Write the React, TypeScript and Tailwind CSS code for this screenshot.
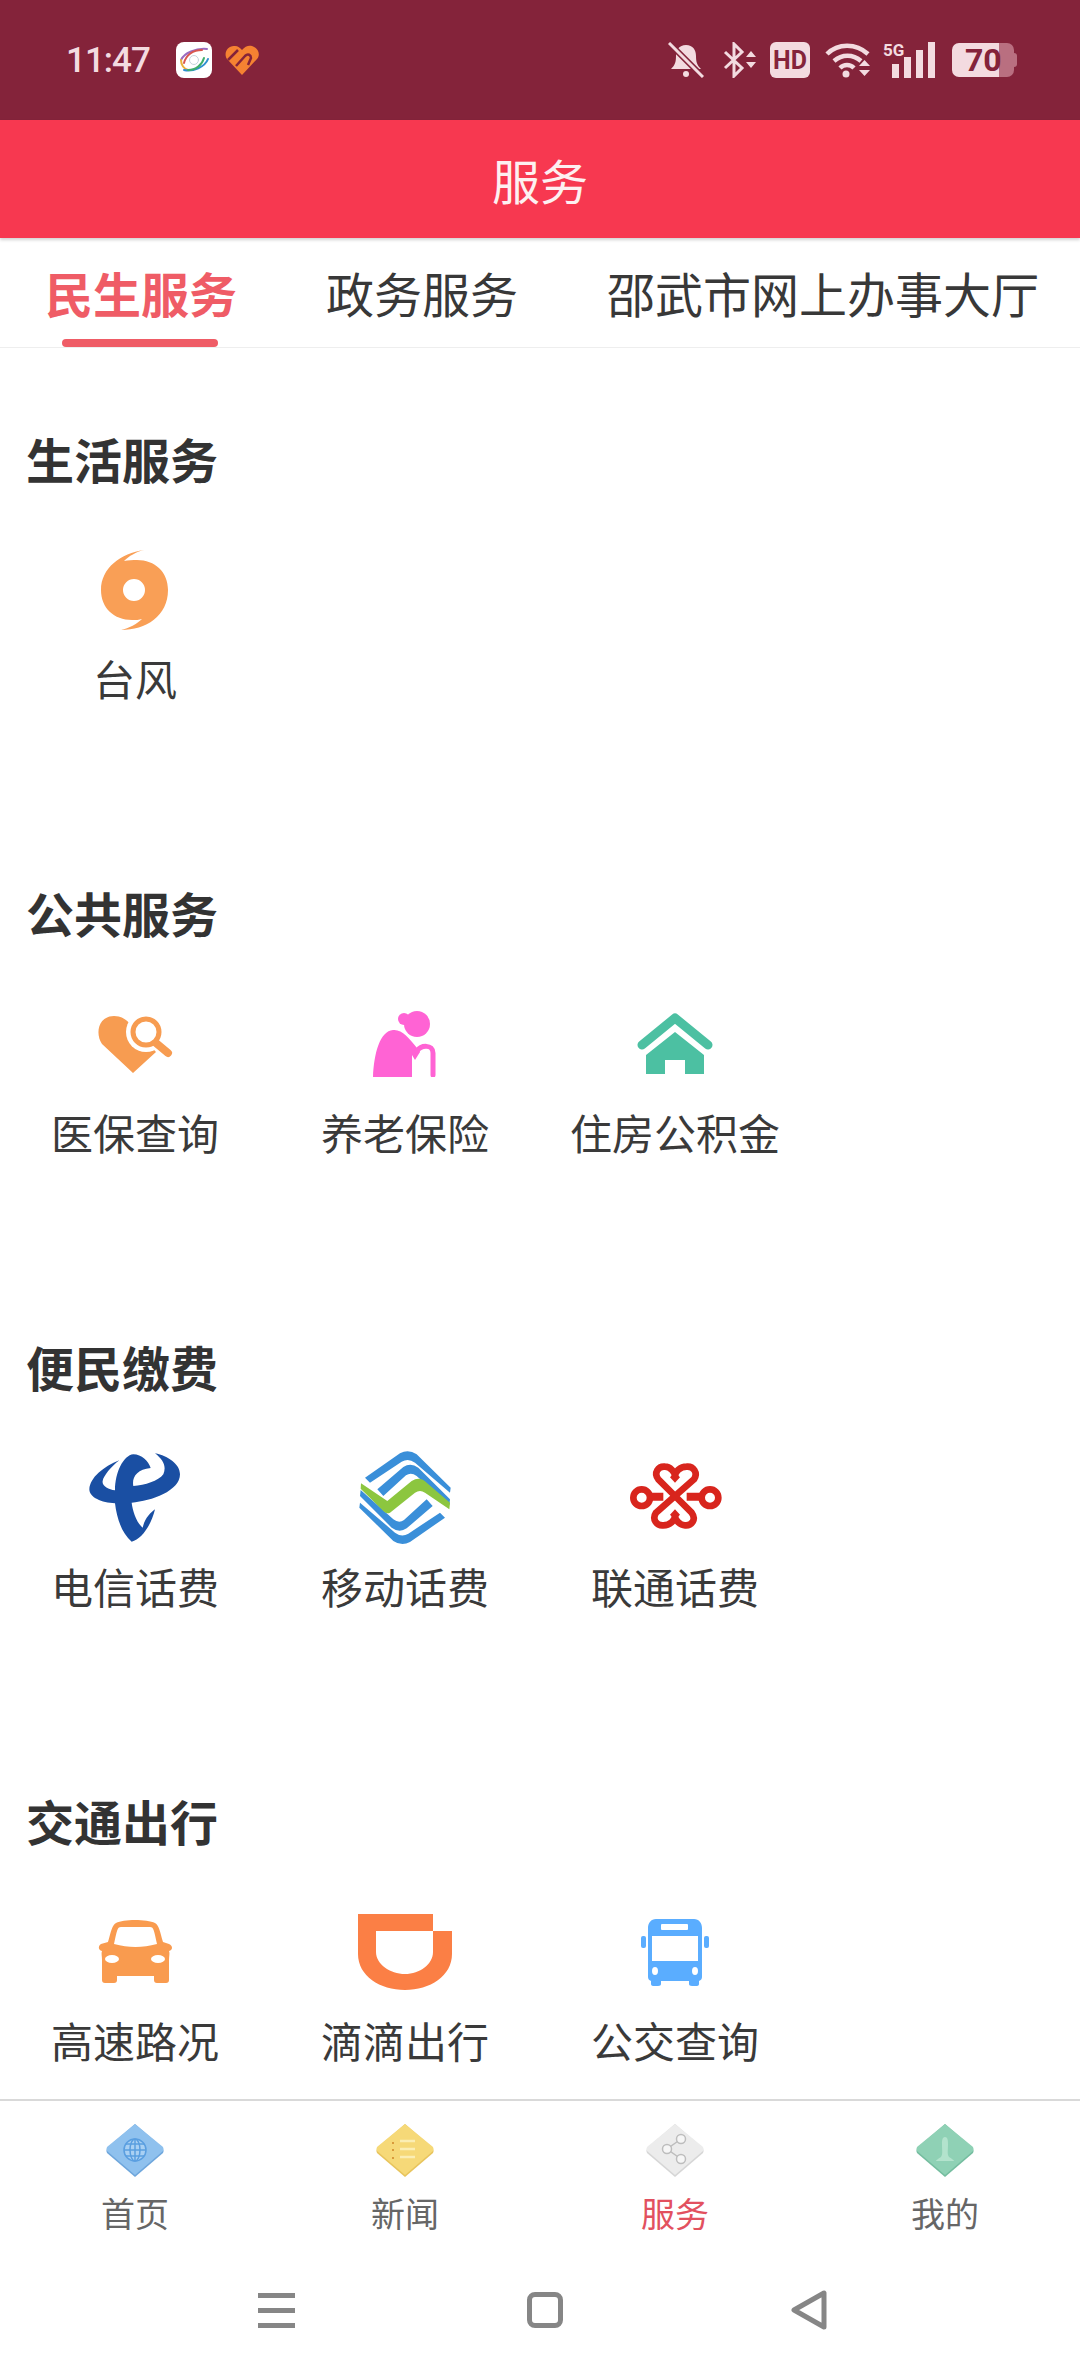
import type { ReactNode } from "react"

const CJK = "font-['Noto_Sans_CJK_SC','Roboto',sans-serif]"

/* status bar */
function AppBadge() {
  return (
    <div className="flex h-9 w-9 items-center justify-center rounded-lg bg-white">
      <svg width="32" height="26" viewBox="0 0 32 26" fill="none" strokeLinecap="round">
        <path d="M29 2C18 1 6 6 3 13" stroke="#9b6bc0" strokeWidth="2" />
        <path d="M24 3C15 3 8 8 6 16" stroke="#d9574f" strokeWidth="2" />
        <path d="M3 13C3 18 6 22 10 23" stroke="#e9b23c" strokeWidth="2" />
        <path d="M6 23C15 25 27 20 30 12" stroke="#2f8fd0" strokeWidth="2" />
        <path d="M10 23C18 23 24 18 26 11" stroke="#3fae6b" strokeWidth="2" />
        <circle cx="16" cy="13" r="4.5" stroke="#c8d3dc" strokeWidth="1" />
      </svg>
    </div>
  )
}

function OrangeHeart() {
  return (
    <svg width="34" height="30" viewBox="0 0 34 30">
      <path d="M17 30L2 14C-2 8 3 0 10 1C13 1 15 3 17 5C20 1 24 0 27 1C33 3 36 9 32 14Z" fill="#f58232" />
      <path d="M3 15L13 5M11 21L20 11C23 8 26 10 26 13L23 20" stroke="#84233a" strokeWidth="2.5" fill="none" />
    </svg>
  )
}

function StatusIcons() {
  const c = "#f3dbe0"
  return (
    <div className="flex items-center">
      <svg width="36" height="36" viewBox="0 0 36 36" className="mr-[18px]">
        <path d="M18 3C11 3 8 8 8 14C8 20 7 23 3 27H33C29 23 28 20 28 14C28 8 25 3 18 3Z" fill={c} />
        <circle cx="18" cy="32" r="3" fill={c} />
        <path d="M1 1L35 35" stroke="#84233a" strokeWidth="6" />
        <path d="M1 1L35 35" stroke={c} strokeWidth="3" />
      </svg>
      <svg width="36" height="36" viewBox="0 0 36 36" className="mr-[12px]">
        <path d="M3 10L20 26L12 34V2L20 10L3 26" stroke={c} strokeWidth="3" fill="none" />
        <path d="M24 15L29 9L34 15ZM24 20L29 26L34 20Z" fill={c} />
      </svg>
      <div className="mr-[15px] flex h-9 w-10 items-center justify-center rounded-[6px] bg-[#f3dbe0] font-['Roboto',sans-serif] text-[25px] leading-none font-bold text-[#84233a]">
        HD
      </div>
      <svg width="46" height="36" viewBox="0 0 46 36" fill="none" className="mr-[12px]">
        <path d="M2 12C13 1 31 1 43 12" stroke={c} strokeWidth="4.5" />
        <path d="M9 19C17 12 28 12 36 19" stroke={c} strokeWidth="4.5" />
        <path d="M15 26C19 22 25 22 29 26" stroke={c} strokeWidth="4.5" />
        <circle cx="21" cy="32" r="3.5" fill={c} />
        <path d="M34 24L39.5 18L45 24ZM34 28L39.5 34L45 28Z" fill={c} />
      </svg>
      <div className="relative mr-[17px] h-9 w-[52px]">
        <span className="absolute top-[-2px] left-0 font-['Roboto',sans-serif] text-[17px] leading-[20px] font-bold text-[#f3dbe0]">
          5G
        </span>
        <div className="absolute inset-0 flex items-end justify-end gap-[5px]">
          <div className="h-[14px] w-[7px] bg-[#f3dbe0]" />
          <div className="h-[21px] w-[7px] bg-[#f3dbe0]" />
          <div className="h-[28px] w-[7px] bg-[#f3dbe0]" />
          <div className="h-9 w-[7px] bg-[#f3dbe0]" />
        </div>
      </div>
      <div className="relative flex h-[34px] w-[66px] items-center">
        <div className="flex h-full w-[47px] items-center justify-end rounded-l-[7px] bg-[#f3dbe0]" />
        <div className="h-full w-[15px] rounded-r-[7px] bg-[#b96f80]" />
        <div className="h-[14px] w-[3px] rounded-r-sm bg-[#b96f80]" />
        <span className="absolute top-0 left-[13px] font-['Roboto',sans-serif] text-[32px] leading-[34px] font-bold text-[#84233a]">
          70
        </span>
      </div>
    </div>
  )
}

/* service icons */
function Typhoon() {
  return (
    <svg width="68" height="80" viewBox="0 0 68 80">
      <path
        fillRule="evenodd"
        fill="#f99f56"
        d="M43 0C20 3 0 18 0 40C0 58 13 70 31 70C35 70 38 70 41 69C36 74 28 78 20 80C45 80 67 66 67 40C67 22 54 10 36 10C32 10 27 10 23 11C28 6 35 2 43 0ZM33 29A11 11 0 1 1 33 51A11 11 0 1 1 33 29Z"
      />
    </svg>
  )
}

function HeartSearch() {
  return (
    <svg width="75" height="60" viewBox="0 0 75 60">
      <path d="M35 59L4 30C-3 20 0 2 16 2C24 2 29 6 33 11L58 38Z" fill="#f79c51" />
      <circle cx="48" cy="18" r="20" fill="#fff" />
      <circle cx="48" cy="18" r="13" fill="#fff" stroke="#f79c51" strokeWidth="5" />
      <path d="M58 29L70 39" stroke="#f79c51" strokeWidth="8" strokeLinecap="round" />
    </svg>
  )
}

function Granny() {
  return (
    <svg width="64" height="66" viewBox="0 0 64 66" fill="#ff63d4">
      <circle cx="44" cy="13" r="13" />
      <circle cx="31" cy="8" r="6" />
      <path d="M0 66C1 42 7 20 20 19C29 18 36 27 44 37L47 41L42 49L39 44V66Z" />
      <path d="M44 40C48 34 60 33 60 42V64" fill="none" stroke="#ff63d4" strokeWidth="5" strokeLinecap="round" />
    </svg>
  )
}

function House() {
  return (
    <svg width="76" height="62" viewBox="0 0 76 62" fill="#4cc0a2">
      <path d="M5 32L38 5L71 32" fill="none" stroke="#4cc0a2" strokeWidth="9" strokeLinecap="round" strokeLinejoin="round" />
      <path d="M38 19L67 42V61H48V47H28V61H9V42Z" />
    </svg>
  )
}

function Telecom() {
  return (
    <svg width="110" height="105" viewBox="0 0 330 315">
      <path
        fill="#1a4fa3"
        d="M118 43C70 62 30 95 28 130C28 155 65 170 105 172C110 215 125 262 155 287C185 280 215 235 225 190C212 200 195 215 188 245C170 230 158 195 155 170C215 165 300 135 300 85C300 55 265 30 225 22C250 42 260 60 250 85C235 105 195 118 160 120C155 95 170 70 212 66C205 45 185 25 160 25C130 28 105 80 105 133C85 130 65 120 68 105C70 90 95 60 118 43Z"
      />
    </svg>
  )
}

function Mobile() {
  const bands = (
    <>
      <path d="M45 95L150 22Q175 8 200 25L302 125L300 140L195 50Q175 35 155 47L60 110Z" />
      <path d="M82 130L160 63Q182 48 205 65L300 160L298 178L200 90Q183 77 168 88L100 150Z" />
    </>
  )
  return (
    <svg width="110" height="105" viewBox="0 0 330 315" fill="#3a8fd9">
      {bands}
      <g transform="rotate(180 165 155)">{bands}</g>
      <path
        fill="#8cc63f"
        d="M33 112L112 165L185 105Q210 90 230 110L300 170L298 190L225 140Q210 130 195 140L120 200Q110 205 100 195L32 128Z"
      />
    </svg>
  )
}

function Unicom() {
  const lobe = (
    <>
      <path d="M165 150L115 100C100 80 115 60 135 62C150 62 165 78 165 90C165 78 180 62 200 62C220 60 235 80 222 100Z" />
      <path d="M165 78L180 94L165 110L150 94Z" fill="#d8251d" stroke="none" />
    </>
  )
  return (
    <svg width="110" height="105" viewBox="0 0 330 315" fill="none" stroke="#d8251d" strokeWidth="20" strokeLinejoin="round">
      {lobe}
      <g transform="rotate(180 165 150)">{lobe}</g>
      <circle cx="65" cy="155" r="25" />
      <circle cx="270" cy="155" r="25" />
      <path d="M88 152H130M245 152H200" strokeWidth="24" />
    </svg>
  )
}

function Car() {
  return (
    <svg width="76" height="64" viewBox="0 0 76 64" fill="#f99b4f">
      <path d="M38 0C46 0 54 1 58 3C62 5 63 12 66 22L72 24C76 26 76 30 72 31C73 33 72 36 72 40V60C72 62 71 63 69 63H60C58 63 57 62 57 60V56H20V60C20 62 19 63 17 63H8C6 63 5 62 5 60V40C5 36 4 33 5 31C1 30 1 26 4 24L11 22C14 12 15 5 19 3C23 1 30 0 38 0Z" />
      <path d="M17 24C20 11 20 7 24 7H53C57 7 57 11 60 24C45 28 32 28 17 24Z" fill="#fff" />
      <ellipse cx="15" cy="39" rx="7" ry="4" fill="#fff" />
      <ellipse cx="61" cy="39" rx="7" ry="4" fill="#fff" />
    </svg>
  )
}

function Didi() {
  return (
    <svg width="94" height="76" viewBox="0 0 94 76">
      <path d="M0 0H75V17H18V38C18 50 32 60 47 60C62 60 75 50 75 38V17H94V40C94 62 72 76 47 76C22 76 0 62 0 40Z" fill="#fb7f45" />
    </svg>
  )
}

function Bus() {
  return (
    <svg width="68" height="67" viewBox="0 0 68 67" fill="#5aadff">
      <path d="M15 0H53C58 0 61 4 61 9V58C61 60 60 61 58 62V65C58 66 57 67 56 67H51C49 67 48 66 48 65V62H20V65C20 66 19 67 17 67H12C11 67 10 66 10 65V62C8 61 7 60 7 58V9C7 4 10 0 15 0Z" />
      <rect x="0" y="17" width="5" height="12" rx="2" />
      <rect x="63" y="17" width="5" height="12" rx="2" />
      <rect x="20" y="5" width="27" height="6" rx="1" fill="#fff" />
      <rect x="11" y="17" width="46" height="25" fill="#fff" />
      <ellipse cx="14" cy="52" rx="3" ry="4" fill="#fff" />
      <ellipse cx="54" cy="52" rx="3" ry="4" fill="#fff" />
    </svg>
  )
}

/* bottom tab diamonds */
function Diamond({ color, edge, children }: { color: string; edge: string; children: ReactNode }) {
  return (
    <svg width="58" height="53" viewBox="0 0 58 53">
      <path d="M29 0L57 24Q58 26.5 57 29L29 53L1 29Q0 26.5 1 24Z" fill={edge} />
      <path d="M29 0L57 23Q58 25.5 57 27L29 51L1 27Q0 25.5 1 23Z" fill={color} />
      {children}
    </svg>
  )
}

const sections: { title: string; items: { label: string; icon: ReactNode }[] }[] = [
  { title: "生活服务", items: [{ label: "台风", icon: <Typhoon /> }] },
  {
    title: "公共服务",
    items: [
      { label: "医保查询", icon: <HeartSearch /> },
      { label: "养老保险", icon: <Granny /> },
      { label: "住房公积金", icon: <House /> },
    ],
  },
  {
    title: "便民缴费",
    items: [
      { label: "电信话费", icon: <Telecom /> },
      { label: "移动话费", icon: <Mobile /> },
      { label: "联通话费", icon: <Unicom /> },
    ],
  },
  {
    title: "交通出行",
    items: [
      { label: "高速路况", icon: <Car /> },
      { label: "滴滴出行", icon: <Didi /> },
      { label: "公交查询", icon: <Bus /> },
    ],
  },
]

const tabs = [
  {
    label: "首页",
    active: false,
    icon: (
      <Diamond color="#8fc1ee" edge="#6ea6dc">
        <g fill="none" stroke="#5a9ee0" strokeWidth="1.5">
          <circle cx="29" cy="26" r="11" fill="#a9d0f3" />
          <ellipse cx="29" cy="26" rx="5" ry="11" />
          <path d="M18 26H40M20 20H38M20 32H38M29 15V37" />
        </g>
      </Diamond>
    ),
  },
  {
    label: "新闻",
    active: false,
    icon: (
      <Diamond color="#f6d978" edge="#e8c45c">
        <path d="M24 17H39M24 25H39M24 33H39" stroke="#fbeeb4" strokeWidth="2.5" />
        <path d="M17 18V20M17 25V27M17 33V35" stroke="#d99a3a" strokeWidth="2" />
      </Diamond>
    ),
  },
  {
    label: "服务",
    active: true,
    icon: (
      <Diamond color="#ececec" edge="#d6d6d6">
        <g fill="#f6f6f6" stroke="#bdbdbd" strokeWidth="1.5">
          <path d="M35 15L21 25L35 35" fill="none" />
          <circle cx="35" cy="15" r="4.5" />
          <circle cx="21" cy="25" r="4.5" />
          <circle cx="35" cy="35" r="4.5" />
        </g>
      </Diamond>
    ),
  },
  {
    label: "我的",
    active: false,
    icon: (
      <Diamond color="#8fd1b5" edge="#74bd9f">
        <path d="M29 13C26 13 26 17 26 20C26 27 27 30 25 33C22 35 20 36 20 37H38C38 36 36 35 33 33C31 30 32 27 32 20C32 17 32 13 29 13Z" fill="#b3e3cd" />
      </Diamond>
    ),
  },
]

export default function App() {
  return (
    <div className={`flex h-[2376px] w-[1080px] flex-col overflow-hidden bg-white ${CJK}`}>
      {/* Status bar */}
      <div className="flex h-[120px] shrink-0 items-center justify-between bg-[#84233a] pr-[62px] pl-[66px]">
        <div className="flex items-center">
          <span className="mr-[26px] w-[84px] font-['Roboto',sans-serif] text-[35px] leading-none font-medium tracking-[-1px] text-[#f3dbe0]">
            11:47
          </span>
          <AppBadge />
          <div className="ml-[13px]">
            <OrangeHeart />
          </div>
        </div>
        <StatusIcons />
      </div>

      {/* Header */}
      <header className="relative z-10 flex h-[118px] shrink-0 items-center justify-center bg-[#f73850] text-[48px] leading-none text-[#fdf0f1] shadow-[0_2px_3px_rgba(0,0,0,0.18)]">
        服务
      </header>

      {/* Tabs */}
      <div className="flex h-[110px] shrink-0 items-center gap-[89px] border-b border-[#eeeeee] pb-[2px] pl-[45px] text-[48px] leading-none text-[#383838]">
        <div className="relative font-bold text-[#ef5c66]">
          民生服务
          <div className="absolute top-[71px] left-[17px] h-2 w-[156px] rounded-full bg-[#ef5c66]" />
        </div>
        <div>政务服务</div>
        <div>邵武市网上办事大厅</div>
      </div>

      {/* Service sections */}
      <main className="min-h-0 flex-1 overflow-hidden">
        {sections.map((section) => (
          <section key={section.title} className="h-[454px] pt-[80px]">
            <h2 className="h-[60px] pl-[26px] text-[48px] leading-[60px] font-bold text-[#333333]">{section.title}</h2>
            <div className="mt-[52px] grid grid-cols-4">
              {section.items.map((item) => (
                <div key={item.label} className="flex flex-col items-center">
                  <div className="flex h-[100px] items-center justify-center">{item.icon}</div>
                  <div className="mt-[8px] text-[42px] leading-[60px] text-[#3a3a3a]">{item.label}</div>
                </div>
              ))}
            </div>
          </section>
        ))}
      </main>

      {/* Bottom tabs */}
      <nav className="grid h-[151px] shrink-0 grid-cols-4 border-t-2 border-[#d9d9d9] pt-[23px]">
        {tabs.map((tab) => (
          <div key={tab.label} className="flex flex-col items-center">
            {tab.icon}
            <span className={`mt-[16px] text-[34px] leading-[40px] ${tab.active ? "text-[#e2515f]" : "text-[#666666]"}`}>
              {tab.label}
            </span>
          </div>
        ))}
      </nav>

      {/* System navigation */}
      <div className="flex h-[126px] shrink-0 items-center justify-center pb-[6px] pl-[4px]">
        <div className="mr-[232px] flex h-[35px] w-[37px] flex-col justify-between">
          <div className="h-[5px] bg-[#868686]" />
          <div className="h-[5px] bg-[#868686]" />
          <div className="h-[5px] bg-[#868686]" />
        </div>
        <div className="mr-[228px] h-9 w-9 rounded-lg border-[5px] border-[#868686]" />
        <svg width="36" height="40" viewBox="0 0 36 40">
          <path d="M33 3V37L3 20Z" fill="none" stroke="#868686" strokeWidth="5" strokeLinejoin="round" />
        </svg>
      </div>
    </div>
  )
}
